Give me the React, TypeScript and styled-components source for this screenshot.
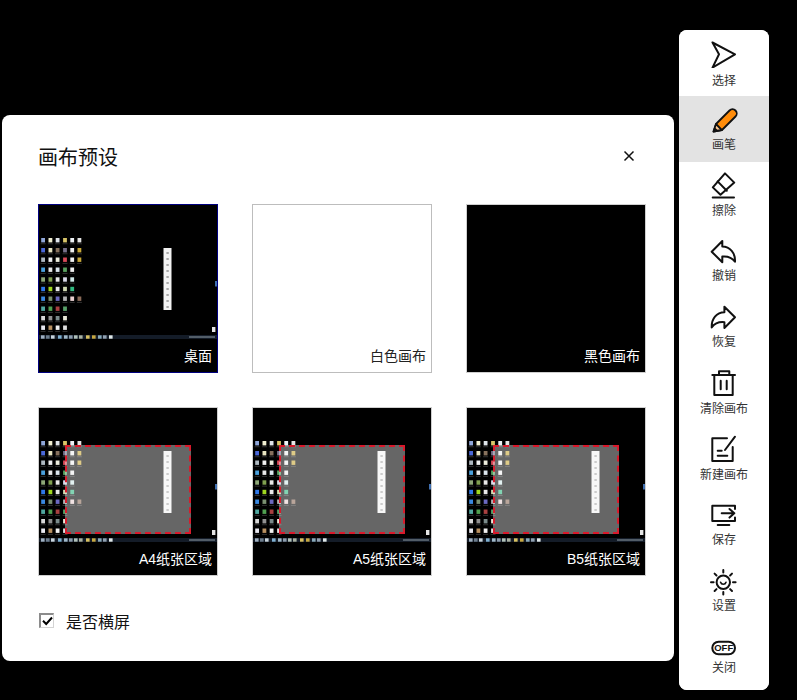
import React from "react";
import styled, { createGlobalStyle } from "styled-components";

const Global = createGlobalStyle`
  html, body { margin: 0; padding: 0; background: #000; }
  body { font-family: "Noto Sans CJK SC", "Noto Sans", sans-serif; }
`;

const Page = styled.div`
  width: 797px;
  height: 700px;
  box-sizing: border-box;
  padding: 30px 28px 10px 2px;
  display: flex;
  align-items: flex-start;
  gap: 5px;
  background: #000;
  overflow: hidden;
`;

const Dialog = styled.section`
  width: 672px;
  height: 546px;
  margin-top: 85px;
  box-sizing: border-box;
  padding: 28px 28px 0 36px;
  background: #fff;
  border-radius: 8px;
  display: flex;
  flex-direction: column;
`;

const Header = styled.header`
  display: flex;
  justify-content: space-between;
  align-items: flex-start;
  height: 30px;
  margin-bottom: 31px;
`;

const Title = styled.h2`
  margin: -1px 0 0;
  font-size: 20px;
  font-weight: 400;
  line-height: 30px;
  color: #111;
`;

const CloseButton = styled.button`
  width: 34px;
  height: 26px;
  padding: 0;
  border: 0;
  background: transparent;
  display: flex;
  align-items: center;
  justify-content: center;
`;

const Grid = styled.div`
  display: grid;
  grid-template-columns: repeat(3, 180px);
  grid-auto-rows: 169px;
  gap: 34px;
`;

const Card = styled.div<{ $selected?: boolean; $light?: boolean }>`
  position: relative;
  box-sizing: border-box;
  overflow: hidden;
  border: 1px solid ${(p) => (p.$selected ? "#00007f" : p.$light ? "#bdbdbd" : "#cfcfcf")};
  background: ${(p) => (p.$light ? "#fff" : "#000")};
`;

const Thumb = styled.svg`
  display: block;
  width: 178px;
  height: 167px;
`;

const BlurGroup = styled.g`
  filter: blur(0.5px);
`;

const PaperArea = styled.div`
  position: absolute;
  left: 26px;
  top: 37px;
  width: 126px;
  height: 89px;
  box-sizing: border-box;
  border: 2px dashed #d81a2c;
  background: rgba(255, 255, 255, 0.4);
`;

const CardLabel = styled.span<{ $dark?: boolean }>`
  position: absolute;
  right: 5px;
  bottom: 6px;
  font-family: "Liberation Sans", "Noto Sans CJK SC", sans-serif;
  font-size: 14px;
  line-height: 20px;
  white-space: nowrap;
  color: ${(p) => (p.$dark ? "#222" : "#fff")};
`;

const Footer = styled.label`
  display: flex;
  align-items: flex-start;
  gap: 12px;
  height: 20px;
  margin-top: 36px;
`;

const CheckBox = styled.span`
  box-sizing: border-box;
  width: 15px;
  height: 15px;
  margin: 1px 0 0 1px;
  border-style: solid;
  border-width: 2px 1px 1px 2px;
  border-color: #8c8c8c #d4d4d4 #d4d4d4 #8c8c8c;
  background: #fff;
  display: flex;
  align-items: center;
  justify-content: center;
`;

const FooterText = styled.span`
  margin-top: -1px;
  font-size: 16px;
  line-height: 20px;
  color: #111;
`;

const Toolbar = styled.nav`
  width: 90px;
  height: 660px;
  background: #fff;
  border-radius: 8px;
  overflow: hidden;
  display: flex;
  flex-direction: column;
`;

const ToolItem = styled.button<{ $active?: boolean }>`
  flex: 0 0 66px;
  width: 100%;
  box-sizing: border-box;
  padding: 8px 0 0;
  border: 0;
  font: inherit;
  background: ${(p) => (p.$active ? "#e3e3e3" : "#fff")};
  display: flex;
  flex-direction: column;
  align-items: center;
`;

const ToolIcon = styled.svg`
  flex: none;
  display: block;
  width: 30px;
  height: 30px;
  fill: none;
  stroke: #111;
  stroke-width: 2;
  stroke-linejoin: round;
  stroke-linecap: round;
`;

const ToolLabel = styled.span<{ $gap: number }>`
  margin-top: ${(p) => p.$gap}px;
  font-size: 12px;
  line-height: 16px;
  color: #333;
  white-space: nowrap;
`;

const rows: string[][] = [
  ["#8fa6d8", "#f0eed0", "#dfe4ea", "#d8c468", "#eef2f6", "#e6e6e6"],
  ["#4a68d8", "#e8e4c0", "#86705c", "#77708a", "#eeeeee", "#c8a838"],
  ["#aeb8c0", "#f0f0f0", "#eeeede", "#d84a58", "#f0f0f0", "#c8a838"],
  ["#4aa0dc", "#e8e8e8", "#dce6ee", "#58a060", "#eeeeee"],
  ["#8ea878", "#80a050", "#e8e8e8", "#d8d8e8", "#d0e8e8"],
  ["#2f78e8", "#a0d820", "#e8e8e8", "#cfd8b0", "#30b880"],
  ["#3a88e0", "#7a9070", "#6a68c0", "#b0b0b0", "#e8d0d0", "#8a6a58"],
  ["#50a8a0", "#50a050", "#a84040", "#58a068"],
  ["#d8d8d8", "#909090", "#7a8a8a", "#e8e8d8"],
  ["#e8e8f0", "#b89060", "#f0f0f0", "#e0e0e0"],
];
const colX = [2.2, 9.5, 16.7, 24.1, 31.3, 38.5];
const rowY = [33, 43, 52.5, 62.5, 72.3, 81.8, 91.5, 101.5, 111, 120.5];
const taskbar = [
  ["#9fb0c0", 2],
  ["#6c7c8c", 7],
  ["#c8d4dc", 12],
  ["#7fb0d0", 19],
  ["#a0b8c8", 25],
  ["#8c9cac", 30],
  ["#b0c0b8", 35],
  ["#a8b0a0", 40],
  ["#d8c060", 47],
  ["#c8a840", 53],
  ["#88a8b8", 59],
  ["#90a0b0", 64],
  ["#e0e8e8", 70],
] as [string, number][];

const DesktopThumb = () => (
  <Thumb viewBox="0 0 178 167">
    <rect width="178" height="167" fill="#000" />
    <rect x="0" y="130" width="178" height="4" fill="#141c28" />
    <BlurGroup>
      {rows.map((row, r) =>
        row.map((c, i) => (
          <g key={`${r}-${i}`}>
            <rect x={colX[i]} y={rowY[r]} width="3.8" height="4.4" fill={c} />
            <rect x={colX[i] - 0.6} y={rowY[r] + 5.4} width="5" height="0.8" fill="#8a8a8a" opacity="0.45" />
          </g>
        ))
      )}
      {taskbar.map(([c, x]) => (
        <rect key={x} x={x} y="130.3" width="3.6" height="3.4" fill={c} />
      ))}
      <rect x="150" y="131.4" width="26" height="1.2" fill="#7c8894" />
      <rect x="173" y="122" width="3.4" height="5" fill="#e4e4e4" />
      <rect x="176" y="76" width="2" height="5.5" fill="#3f6fb0" />
    </BlurGroup>
    <rect x="124.5" y="43" width="8" height="62" fill="#f2f2f2" />
    <BlurGroup>
      {[4, 10, 16, 22, 28, 34, 40, 46, 52, 58].map((d) => (
        <rect key={d} x="127.4" y={43 + d} width="2.4" height="2" fill="#a8a8a8" />
      ))}
    </BlurGroup>
  </Thumb>
);

const icons: Record<string, React.ReactNode> = {
  select: <path d="M3.5 4.5 26 16.3 3.5 29.6 10 16.3Z" />,
  pen: (
    <>
      <path d="M4.5 27.5 7 20 20.5 6.5a4.2 4.2 0 0 1 6 6L13 26Z" fill="#ff8c0a" strokeWidth="1.8" />
      <path d="M4.5 27.5 7 20 12.8 26Z" fill="#ffc890" strokeWidth="1.8" />
      <path d="M4.5 27.5 6 23.4 8.6 25.9Z" fill="#111" stroke="none" />
    </>
  ),
  erase: (
    <>
      <path d="M16 3.4 25.3 12.6 11.5 24.8 3.8 17.4Z" />
      <path d="M8.6 11.4 17.8 20.8" />
      <path d="M3.7 27.5H25" />
    </>
  ),
  undo: <path d="M2.7 15.7 13.3 5v5.5C21 10.5 26.5 17 26 25.7 23 21.5 19 20 13.3 20.5v5.8Z" />,
  redo: <path d="M26 15.3 15.4 4.7v5.5C7.7 10.2 2.2 16.7 2.7 25.4 5.7 21.2 9.7 19.7 15.4 20.2V26Z" />,
  clear: (
    <>
      <path d="M3.3 7H26" />
      <path d="M10 7V3.2H20.3V7" />
      <path d="M5.3 7V27H23.7V7" />
      <path d="M11.7 12.7V21.3M17.7 12.7V21.3" />
    </>
  ),
  create: (
    <>
      <path d="M18 4.3H3.3V27H23.7V13" />
      <path d="M26 2.7 16 16" />
      <path d="M8.7 16.7H12.7M8.7 21.7H18.3" />
    </>
  ),
  save: (
    <>
      <path d="M26 9V5.7H3.3V21H26V17.5" />
      <path d="M8.7 25H20.3" />
      <path d="M12.7 13.3H25.3M20.5 9 25.3 13.3 20.5 17.6" />
    </>
  ),
  settings: (
    <>
      <circle cx="14.3" cy="16.3" r="6.7" />
      <path d="M14.3 4v2.6M14.3 26v2.6M2 16.3h2.6M24 16.3h2.6M5.6 7.6l1.9 1.9M21.1 23.1 23 25M23 7.6l-1.9 1.9M7.5 23.1 5.6 25" />
      <path d="M11.6 16.2a2.8 2.8 0 0 0 5.4 0" strokeWidth="1.6" />
    </>
  ),
  off: (
    <>
      <rect x="3.3" y="9.7" width="22.7" height="12.6" rx="6.3" />
      <text
        x="14.7"
        y="19.3"
        textAnchor="middle"
        fontFamily="'Liberation Sans', sans-serif"
        fontWeight="700"
        fontSize="9.5"
        fill="#111"
        stroke="none"
      >
        OFF
      </text>
    </>
  ),
};

const tools = [
  { key: "select", label: "选择", gap: 4 },
  { key: "pen", label: "画笔", gap: 2, active: true },
  { key: "erase", label: "擦除", gap: 2 },
  { key: "undo", label: "撤销", gap: 1 },
  { key: "redo", label: "恢复", gap: 1 },
  { key: "clear", label: "清除画布", gap: 2 },
  { key: "create", label: "新建画布", gap: 2 },
  { key: "save", label: "保存", gap: 1 },
  { key: "settings", label: "设置", gap: 1 },
  { key: "off", label: "关闭", gap: -3 },
];

export default function App() {
  return (
    <Page>
      <Global />
      <Dialog>
        <Header>
          <Title>画布预设</Title>
          <CloseButton aria-label="关闭">
            <svg width="12" height="12" viewBox="0 0 12 12" fill="none" stroke="#111" strokeWidth="1.5">
              <path d="M1.5 1.5 10.5 10.5M10.5 1.5 1.5 10.5" />
            </svg>
          </CloseButton>
        </Header>
        <Grid>
          <Card $selected>
            <DesktopThumb />
            <CardLabel>桌面</CardLabel>
          </Card>
          <Card $light>
            <CardLabel $dark>白色画布</CardLabel>
          </Card>
          <Card>
            <CardLabel>黑色画布</CardLabel>
          </Card>
          {["A4纸张区域", "A5纸张区域", "B5纸张区域"].map((t) => (
            <Card key={t}>
              <DesktopThumb />
              <PaperArea />
              <CardLabel>{t}</CardLabel>
            </Card>
          ))}
        </Grid>
        <Footer>
          <CheckBox>
            <svg width="11" height="10" viewBox="0 0 11 10" fill="none" stroke="#000" strokeWidth="2">
              <path d="M1 4.8 4.2 8 10 1.5" />
            </svg>
          </CheckBox>
          <FooterText>是否横屏</FooterText>
        </Footer>
      </Dialog>
      <Toolbar>
        {tools.map((t) => (
          <ToolItem key={t.key} $active={t.active}>
            <ToolIcon viewBox="0 0 30 30">{icons[t.key]}</ToolIcon>
            <ToolLabel $gap={t.gap}>{t.label}</ToolLabel>
          </ToolItem>
        ))}
      </Toolbar>
    </Page>
  );
}
